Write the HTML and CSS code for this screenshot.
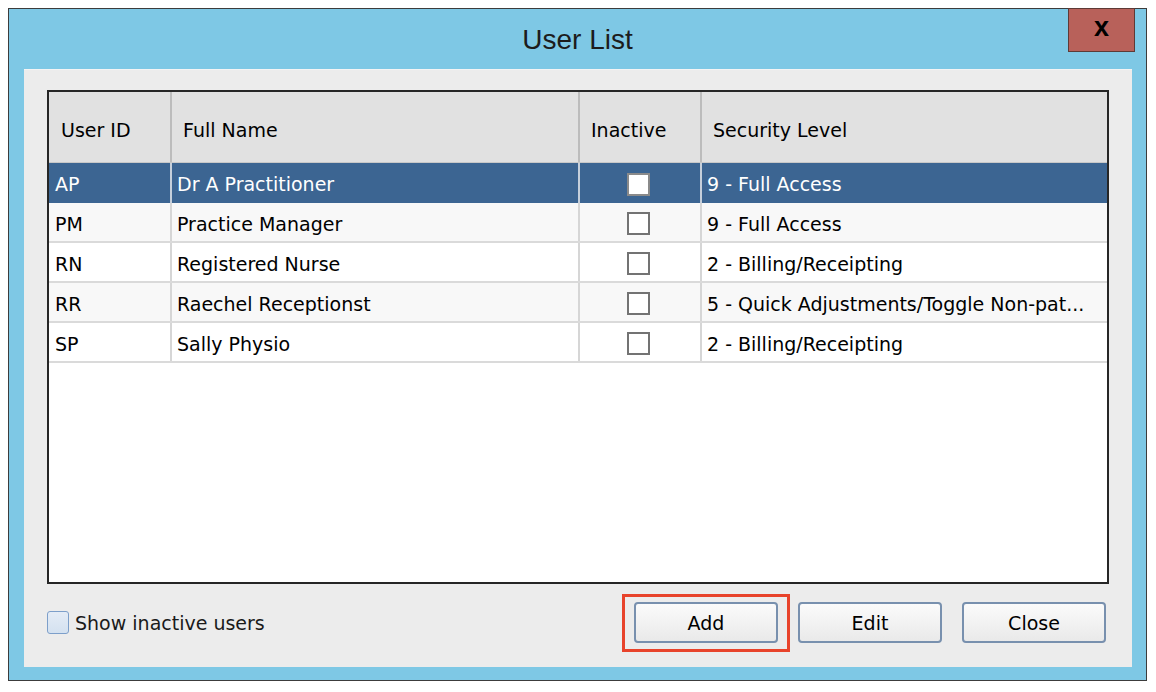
FILE: index.html
```html
<!DOCTYPE html>
<html>
  <head>
    <meta name="viewport" content="width=device-width, initial-scale=1.0">
    <link rel="stylesheet" href="styles.css">
  </head>
  <body>
    <div class="window">
      <div class="titlebar">
        <div class="title">User List</div>
        <div class="close-x">x</div>
      </div>

      <div class="client">
        <div class="grid">
          <div class="row header">
            <div class="cell">User ID</div>
            <div class="cell">Full Name</div>
            <div class="cell">Inactive</div>
            <div class="cell">Security Level</div>
          </div>
          <div class="row selected">
            <div class="cell">AP</div>
            <div class="cell">Dr A Practitioner</div>
            <div class="cell check"><span class="box"></span></div>
            <div class="cell">9 - Full Access</div>
          </div>
          <div class="row alt">
            <div class="cell">PM</div>
            <div class="cell">Practice Manager</div>
            <div class="cell check"><span class="box"></span></div>
            <div class="cell">9 - Full Access</div>
          </div>
          <div class="row">
            <div class="cell">RN</div>
            <div class="cell">Registered Nurse</div>
            <div class="cell check"><span class="box"></span></div>
            <div class="cell">2 - Billing/Receipting</div>
          </div>
          <div class="row alt">
            <div class="cell">RR</div>
            <div class="cell">Raechel Receptionst</div>
            <div class="cell check"><span class="box"></span></div>
            <div class="cell">5 - Quick Adjustments/Toggle Non-pat...</div>
          </div>
          <div class="row">
            <div class="cell">SP</div>
            <div class="cell">Sally Physio</div>
            <div class="cell check"><span class="box"></span></div>
            <div class="cell">2 - Billing/Receipting</div>
          </div>
        </div>

        <div class="footer">
          <label class="show-inactive"><span class="small-box"></span>Show inactive users</label>
          <div class="buttons">
            <span class="highlight"><button class="btn">Add</button></span>
            <button class="btn">Edit</button>
            <button class="btn">Close</button>
          </div>
        </div>
      </div>
    </div>
  </body>
</html>
```

FILE: styles.css
```css
/* Page */
body {
  margin: 0;
  background-color: #ffffff;
  font-family: "DejaVu Sans", Verdana, sans-serif;
}

/* Window frame */
.window {
  margin: 8px 0 0 8px;
  width: 1139px;
  height: 673px;
  box-sizing: border-box;
  border: 1px solid #3c3c3c;
  background-color: #7ec8e5;
  display: flex;
  flex-direction: column;
}

.titlebar {
  height: 60px;
  flex: none;
  position: relative;
  display: flex;
  justify-content: center;
  align-items: center;
}

.title {
  font-family: "Liberation Sans", Arial, sans-serif;
  font-size: 28px;
  color: #1c1c1c;
  padding-top: 2px;
}

.close-x {
  position: absolute;
  top: -1px;
  right: 11px;
  width: 67px;
  height: 44px;
  box-sizing: border-box;
  background-color: #b8615a;
  border: 1px solid #5e3a36;
  font-family: "Liberation Sans", Arial, sans-serif;
  font-weight: bold;
  font-size: 27px;
  line-height: 36px;
  text-align: center;
  color: #000000;
}

/* Client area */
.client {
  flex: 1;
  margin: 0 14px 13px 15px;
  background-color: #ececec;
  border-top: 1px solid #f4f4f4;
  display: flex;
  flex-direction: column;
  padding: 20px 23px 0 23px;
}

/* Grid */
.grid {
  height: 494px;
  box-sizing: border-box;
  border: 2px solid #262626;
  background-color: #ffffff;
  overflow: hidden;
}

.row {
  display: grid;
  grid-template-columns: 123px 408px 122px 1fr;
  height: 40px;
  box-sizing: border-box;
  border-bottom: 2px solid #dadada;
  font-size: 19px;
  color: #000000;
}

.row.alt {
  background-color: #f8f8f8;
}

.row.selected {
  background-color: #3c6592;
  color: #ffffff;
  border-bottom: 0;
}

.cell {
  box-sizing: border-box;
  border-right: 2px solid #d6d6d6;
  padding: 2px 6px 0 6px;
  line-height: 38px;
  white-space: nowrap;
  overflow: hidden;
}

.cell:last-child {
  border-right: 0;
}

.row .cell:nth-child(2),
.row .cell:nth-child(4) {
  padding-left: 5px;
}

.row.selected .cell {
  border-right-color: #c5cfdb;
}

.row.header {
  height: 71px;
  background-color: #e1e1e1;
  border-bottom: 1px solid #c8c8c8;
}

.row.header .cell {
  line-height: 70px;
  padding: 3px 0 0 11px;
  border-right-color: #bcbcbc;
}

.row.header .cell:first-child {
  padding-left: 12px;
}

.check {
  display: flex;
  justify-content: center;
  align-items: center;
}

.box {
  width: 23px;
  height: 23px;
  box-sizing: border-box;
  border: 2px solid #737373;
  background-color: #ffffff;
  margin-left: -3px;
}

.row.selected .box {
  border-color: #8a8a8a;
}

/* Footer */
.footer {
  display: flex;
  justify-content: space-between;
  align-items: center;
  margin-top: 18px;
  padding-right: 3px;
}

.show-inactive {
  display: flex;
  align-items: center;
  font-size: 19px;
  color: #1a1a1a;
}

.small-box {
  width: 22px;
  height: 23px;
  box-sizing: border-box;
  border: 1px solid #7d9fca;
  border-radius: 3px;
  background: linear-gradient(#e4ecf6, #d4e1f0);
  margin-right: 6px;
}

.buttons {
  display: flex;
  gap: 20px;
}

.btn {
  width: 144px;
  height: 41px;
  box-sizing: border-box;
  border: 2px solid #7890ae;
  border-radius: 4px;
  background: linear-gradient(#fbfbfb, #e9e9e9);
  font-family: "DejaVu Sans", Verdana, sans-serif;
  font-size: 19px;
  color: #000000;
  padding: 0;
}

.highlight {
  position: relative;
  display: block;
}

.highlight::after {
  content: "";
  position: absolute;
  left: -12px;
  right: -12px;
  top: -8px;
  bottom: -9px;
  border: 3px solid #e8432b;
}
```
